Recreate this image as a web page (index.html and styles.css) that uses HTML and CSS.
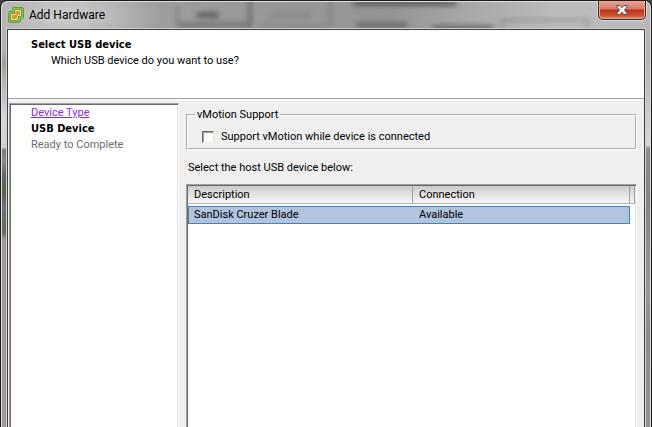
FILE: index.html
```html
<!DOCTYPE html>
<html lang="en">
<head>
<meta charset="utf-8">
<title>Add Hardware</title>
<link rel="stylesheet" href="styles.css">
</head>
<body>
<div class="window">
  <header class="titlebar">
    <svg class="glass" viewBox="0 0 638 26" preserveAspectRatio="none" aria-hidden="true">
      <defs>
        <filter id="soft" filterUnits="userSpaceOnUse" x="-20" y="-20" width="680" height="66"><feGaussianBlur stdDeviation="2.500"/></filter>
        <radialGradient id="glow"><stop offset="0" stop-color="#d0d0d0"/><stop offset="1" stop-color="#d0d0d0" stop-opacity="0"/></radialGradient>
      </defs>
      <ellipse cx="60" cy="14" rx="95" ry="34" fill="url(#glow)"/>
      <g filter="url(#soft)" opacity=".75">
        <path d="M172 23H243V-5" fill="none" stroke="#606060" stroke-width="4"/>
        <path d="M171 5V24" fill="none" stroke="#777" stroke-width="3"/>
        <path d="M190 13H212" stroke="#505050" stroke-width="6"/>
        <path d="M252 24H323V-5" fill="none" stroke="#7b7b7b" stroke-width="3"/>
        <path d="M264 13H304" stroke="#838383" stroke-width="5"/>
        <path d="M346 1H449" stroke="#505050" stroke-width="6"/>
        <path d="M350 23H400" stroke="#606060" stroke-width="6"/>
        <path d="M425 26H486" stroke="#505050" stroke-width="5"/>
        <path d="M494 30V18H580V30" fill="none" stroke="#8c8c8c" stroke-width="3"/>
      </g>
    </svg>
    <svg class="logo" viewBox="0 0 16 16" aria-hidden="true">
      <path d="M7 1.500H13Q14.500 1.500 14.500 3V9Q14.500 10.500 13 10.500H11.500V13Q11.500 14.500 10 14.500H3Q1.500 14.500 1.500 13V7Q1.500 5.500 3 5.500H5.500V3Q5.500 1.500 7 1.500Z" fill="#deded6" stroke="#467d25" stroke-width="3"/>
      <path d="M7 1.500H13Q14.500 1.500 14.500 3V9Q14.500 10.500 13 10.500H11.500V13Q11.500 14.500 10 14.500H3Q1.500 14.500 1.500 13V7Q1.500 5.500 3 5.500H5.500V3Q5.500 1.500 7 1.500Z" fill="none" stroke="#86c440" stroke-width="2"/>
      <path d="M7.500 4H12V8H9V12H4V8H7.500Z" fill="#e49b13"/>
    </svg>
    <h1 class="title">Add Hardware</h1>
    <button class="close" type="button" aria-label="Close">
      <svg viewBox="0 0 12 10" aria-hidden="true">
        <path d="M1 .5H4L6 2.700L8 .5H11V2L8.500 5L11 8V9.500H8L6 7.300L4 9.500H1V8L3.500 5L1 2Z" fill="#f6f6f6" stroke="#4d5266"/>
      </svg>
    </button>
  </header>
  <div class="client">
    <div class="banner">
      <h2>Select USB device</h2>
      <p>Which USB device do you want to use?</p>
    </div>
    <div class="body">
      <nav class="steps" aria-label="Steps">
        <a href="#">Device Type</a>
        <strong>USB Device</strong>
        <span>Ready to Complete</span>
      </nav>
      <main class="page">
        <fieldset>
          <legend>vMotion Support</legend>
          <input type="checkbox" id="vmotion">
          <label for="vmotion">Support vMotion while device is connected</label>
        </fieldset>
        <p class="prompt" id="prompt">Select the host USB device below:</p>
        <div class="list">
          <table aria-labelledby="prompt">
            <colgroup><col class="c-desc"><col><col class="c-end"></colgroup>
            <thead><tr><th scope="col">Description</th><th scope="col">Connection</th><td></td></tr></thead>
            <tbody><tr><td>SanDisk Cruzer Blade</td><td>Available</td><td></td></tr></tbody>
          </table>
        </div>
      </main>
    </div>
  </div>
</div>
</body>
</html>
```
FILE: styles.css
```css
* { box-sizing: border-box; }

body {
  margin: 0;
  background: #444;
  color: #000;
  font: 11px/16px Roboto, "DejaVu Sans Condensed", sans-serif;
}

h1, h2, p { margin: 0; font-size: inherit; }

h2, strong { font-family: "DejaVu Sans Condensed", "DejaVu Sans", sans-serif; }

.window {
  min-height: 100vh;
  display: flex;
  flex-direction: column;
  padding: 0 5px;
  border: 1px solid #1c191d;
  border-bottom: 0;
  border-radius: 7px 7px 0 0;
  box-shadow: inset 1px 1px #dedede, inset -1px 0 #dedede;
  background:
    linear-gradient(#b4b4b4 28px, #b4b0b0 48px, #98a096 62px, #b4b4b0 80px, #b8c0c8 95px, #d8d4d4 115px, #d4d0d0 146px, #777 149px, #888 160px, #666 175px, #56653c 188px, #716d85 208px, #62705c 222px, #6b6867 232px, #9d9897 238px) left / 6px 100% no-repeat,
    linear-gradient(#b8b8b8, #b4b4b4 60px, #d8d8d8 144px, #8c8c8c 148px, #858585 200px, #9c9898 290px, #8f8b8b 330px, #979393) right / 6px 100% no-repeat,
    linear-gradient(90deg, #aaa, #999 35%, #959595 60%, #bbb 85%);
}

.titlebar {
  position: relative;
  display: flex;
  height: 27px;
  padding-left: 2px;
}

.glass {
  position: absolute;
  inset: 1px 0 0;
  width: 100%;
  height: 26px;
}

.logo {
  position: relative;
  width: 16px;
  height: 16px;
  margin: 6px 5px 0 0;
}

.title {
  position: relative;
  flex: 1;
  font: 12px/28px Roboto, "Open Sans", sans-serif;
}

.close {
  position: relative;
  width: 48px;
  height: 19px;
  padding: 0;
  border: 1px solid #4b1d1b;
  border-top: 0;
  border-radius: 0 0 5px 5px;
  box-shadow: inset 0 0 0 1px #eea996, 0 1px #ddd, 1px 0 #ddd, -1px 0 #ddd;
  background: linear-gradient(#e9a596, #d47866 45%, #b93118 50%, #d0502c 80%, #e58b68);
}

.close svg {
  display: block;
  width: 12px;
  height: 10px;
  margin: 0 auto;
}

.client {
  flex: 1;
  display: flex;
  flex-direction: column;
  border: 1px solid #3f3f3f;
  border-bottom: 0;
  box-shadow: 0 0 0 1px #d0d0d0;
  margin: 1px 1px 0;
  background: #efefef;
}

.banner {
  height: 69px;
  padding: 7px 23px;
  background: #fff;
  border-bottom: 1px solid #a0a0a0;
}

.banner p { padding-left: 20px; }

.body {
  flex: 1;
  display: flex;
  gap: 7px;
  padding: 3px 7px 0 1px;
  border-top: 1px solid #fff;
}

.steps, .list {
  border: 1px solid;
  border-color: #a0a0a0 #fff #fff #a0a0a0;
  border-bottom: 0;
  box-shadow: inset 1px 1px #696969, inset -1px 0 #e3e3e3;
  background: #fff;
}

.steps {
  flex: 0 0 170px;
  display: flex;
  flex-direction: column;
  align-items: flex-start;
  padding: 1px 21px;
}

.steps a { color: #8a2be2; }
.steps span { color: #6d6d6d; }

.page {
  flex: 1;
  min-width: 0;
  display: flex;
  flex-direction: column;
  padding-top: 4px;
}

fieldset {
  display: flex;
  align-items: center;
  gap: 7px;
  height: 43px;
  margin: 0;
  padding: 6px 14px 0;
  border: 2px groove #fff;
}

legend { margin-left: -7px; padding: 0 2px; }

fieldset input {
  appearance: none;
  width: 12px;
  height: 12px;
  margin: 0;
  border: 1px solid;
  border-color: #696969 #e3e3e3 #e3e3e3 #696969;
  box-shadow: inset 1px 1px #a0a0a0;
  background: #fff;
}

.prompt { margin: 10px 2px 8px; }

.list {
  flex: 1;
  padding: 1px;
}

table {
  width: 100%;
  table-layout: fixed;
  border-collapse: separate;
  border-spacing: 0;
}

.c-desc { width: 225px; }
.c-end { width: 5px; }

th, td {
  height: 18px;
  padding: 0 6px;
  font-weight: normal;
  line-height: 16px;
  text-align: left;
}

thead th, thead td {
  height: 18px;
  padding-top: 1px;
  border-right: 1px solid #a0a0a0;
  border-bottom: 1px solid #b5b5b5;
  background: linear-gradient(#c9c9c9, #dedede 40%, #f6f6f6);
}

thead::after {
  content: "";
  display: table-row;
  height: 2px;
}

td:last-child { padding: 0; }

tbody td {
  border: solid #4682b4;
  border-width: 1px 0;
  background: #b0c4de;
}

tbody td:first-child { border-left-width: 1px; padding-left: 5px; }
tbody td:nth-child(2) { border-right-width: 1px; }
tbody td:last-child { border: 0; background: none; }
```
